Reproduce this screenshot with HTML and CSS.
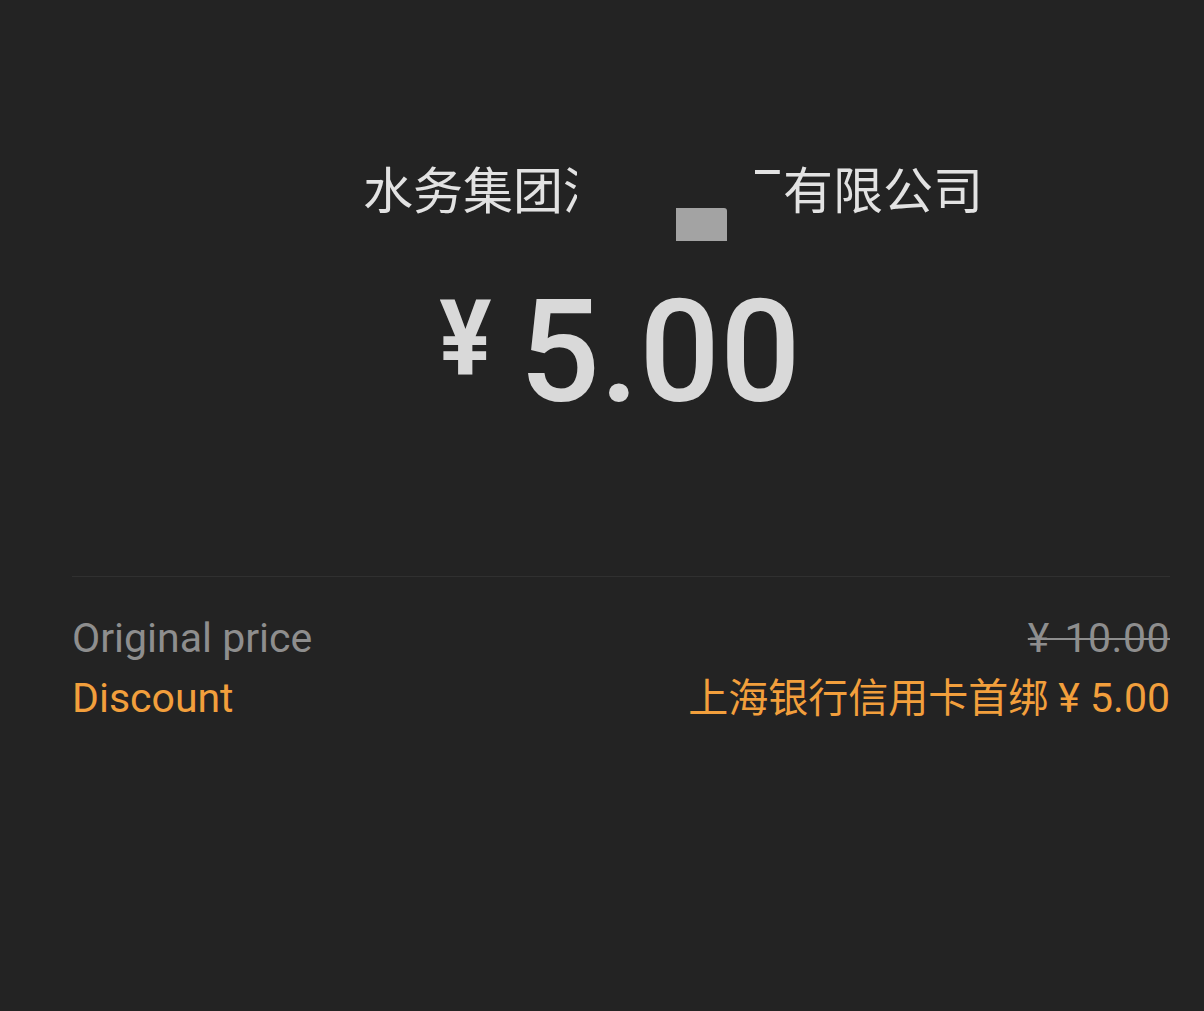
FILE: index.html
```html
<!DOCTYPE html>
<html lang="zh">
<head>
<meta charset="utf-8">
<title>Payment</title>
<link rel="stylesheet" href="styles.css">
</head>
<body>
<main class="page">
  <div class="merchant">
    <span class="clip clip-left"><span>水务集团浦</span></span>
    <span class="gap"><span class="redact-block"></span></span>
    <span class="clip clip-right"><span>厂有限公司</span></span>
  </div>
  <div class="amount">
    <span class="cur">¥</span>
    <span class="num">5.00</span>
  </div>
  <div class="divider"></div>
  <div class="row row-first">
    <span class="label">Original price</span>
    <span class="orig">¥ 10.00</span>
  </div>
  <div class="row discount">
    <span class="label">Discount</span>
    <span class="value"><span class="cjk">上海银行信用卡首绑</span> ¥ 5.00</span>
  </div>
</main>
</body>
</html>
```
FILE: styles.css
```css
html, body {
  margin: 0;
  background: #232323;
}
body {
  width: 1204px;
  height: 1011px;
  overflow: hidden;
  font-family: Roboto, "Noto Sans CJK SC", sans-serif;
}
.page {
  padding: 0 34px 0 72px;
}
.merchant {
  position: relative;
  display: flex;
  padding-top: 154px;
  padding-left: 291px;
  font-size: 50px;
  line-height: 66px;
  color: #e2e2e2;
  font-family: "Noto Sans CJK SC", sans-serif;
  white-space: nowrap;
}
.clip {
  display: flex;
  overflow: hidden;
}
.clip-left {
  width: 214px;
  justify-content: flex-start;
}
.gap {
  width: 178px;
  flex: none;
}
.clip-right {
  width: 228px;
  justify-content: flex-end;
}
.redact-block {
  position: absolute;
  left: 604px;
  top: 208px;
  width: 51px;
  height: 33px;
  background: #a3a3a3;
  border-radius: 0 3px 0 0;
}
.amount {
  display: flex;
  justify-content: center;
  align-items: flex-start;
  margin-top: 62px;
  color: #d9d9d9;
  padding-right: 4px;
}
.cur {
  font-size: 106px;
  font-weight: 700;
  line-height: 1;
  margin-top: 4px;
  margin-right: 25px;
  transform: scaleX(0.92);
}
.num {
  font-size: 142px;
  font-weight: 500;
  line-height: 1;
}
.divider {
  margin-top: 152px;
  height: 1px;
  background: #303030;
}
.row {
  display: flex;
  justify-content: space-between;
  font-size: 41px;
  line-height: 60px;
  color: #8e8e8e;
}
.row-first {
  margin-top: 31px;
}
.orig {
  text-decoration: line-through;
  text-decoration-thickness: 2px;
  word-spacing: 4px;
  letter-spacing: 0.5px;
}
.cjk {
  font-size: 40px;
}
.discount {
  color: #f29f3c;
}
```
